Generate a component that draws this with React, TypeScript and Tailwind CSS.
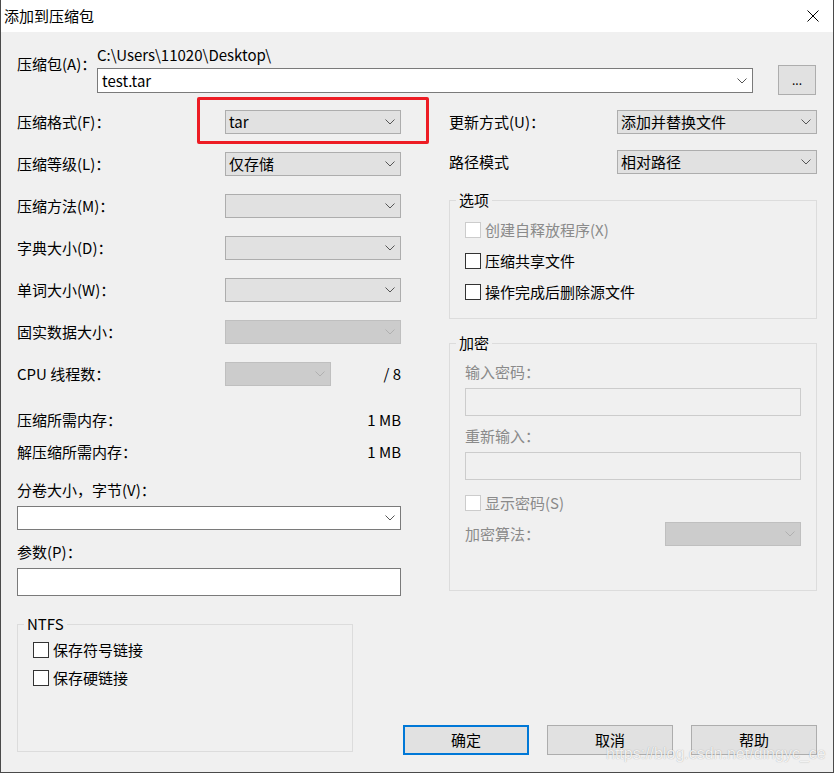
import React from "react";

type ComboKind = "gray" | "white" | "disabled";

function Chevron({ light }: { light?: boolean }) {
  return (
    <svg width="10" height="6" viewBox="0 0 10 6" className="shrink-0">
      <polyline
        points="0.5,0.5 5,5 9.5,0.5"
        fill="none"
        stroke={light ? "#b0b0b0" : "#555555"}
        strokeWidth="1"
      />
    </svg>
  );
}

function Combo({ value, kind = "gray", className = "" }: { value?: string; kind?: ComboKind; className?: string }) {
  const tone =
    kind === "white"
      ? "bg-white border-[#7a7a7a]"
      : kind === "disabled"
      ? "bg-[#cccccc] border-[#bfbfbf]"
      : "bg-[#e1e1e1] border-[#adadad]";
  return (
    <div className={`h-6 border flex items-center justify-between pl-[3px] pr-[5px] ${tone} ${className}`}>
      <span className="leading-5">{value}</span>
      <Chevron light={kind === "disabled"} />
    </div>
  );
}

function Check({ label, disabled }: { label: string; disabled?: boolean }) {
  return (
    <div className="flex items-center gap-[4px] h-5">
      <span className={`w-4 h-4 border bg-white ${disabled ? "border-[#cccccc]" : "border-[#333333]"}`} />
      <span className={`leading-5 ${disabled ? "text-[#8a8a8a]" : "text-black"}`}>{label}</span>
    </div>
  );
}

// group box: padding goes on the inner div so the legend stays near the left edge
function Group({ title, className = "", inner = "", children }: { title: string; className?: string; inner?: string; children: React.ReactNode }) {
  return (
    <fieldset className={`border border-[#dcdcdc] ${className}`}>
      <legend className="ml-[6px] px-[3px] leading-5">{title}</legend>
      <div className={inner}>{children}</div>
    </fieldset>
  );
}

// left column rows: label + combobox
const formatRows: { label: string; value?: string; kind: ComboKind }[] = [
  { label: "压缩格式(F)：", value: "tar", kind: "gray" },
  { label: "压缩等级(L)：", value: "仅存储", kind: "gray" },
  { label: "压缩方法(M)：", kind: "gray" },
  { label: "字典大小(D)：", kind: "gray" },
  { label: "单词大小(W)：", kind: "gray" },
  { label: "固实数据大小：", kind: "disabled" },
];

export default function App() {
  return (
    <div className="relative w-[834px] h-[773px] flex flex-col bg-[#f0f0f0] border-l border-r border-b border-[#4a4a4a] text-[15px] text-black font-['Noto_Sans_CJK_SC',sans-serif] overflow-hidden">
      {/* Title bar */}
      <div className="h-8 shrink-0 bg-white flex items-center justify-between pl-[3px] pr-[14px]">
        <span className="leading-5">添加到压缩包</span>
        <svg width="12" height="12" viewBox="0 0 12 12">
          <path d="M0.5 0.5 L11.5 11.5 M11.5 0.5 L0.5 11.5" stroke="#000" strokeWidth="1" />
        </svg>
      </div>

      <div className="flex-1 flex flex-col pt-[13px] pl-[16px] pr-[16px]">
        {/* Archive path */}
        <div className="flex items-start">
          <span className="w-[80px] mt-[9px] leading-5">压缩包(A)：</span>
          <div className="w-[656px] flex flex-col">
            <span className="leading-5">C:\Users\11020\Desktop\</span>
            <Combo value="test.tar" kind="white" className="mt-[3px] h-[25px] pl-[4px]" />
          </div>
          <div className="ml-[25px] mt-[20px] w-[38px] h-[30px] bg-[#e1e1e1] border border-[#adadad] flex items-center justify-center text-[12px] leading-none">
            ...
          </div>
        </div>

        {/* Two columns */}
        <div className="mt-[15px] flex gap-[48px]">
          {/* Left */}
          <div className="w-[384px] flex flex-col">
            <div className="flex flex-col gap-[18px]">
              {formatRows.map((r) => (
                <div key={r.label} className="flex items-center">
                  <span className="w-[208px] leading-5">{r.label}</span>
                  <Combo value={r.value} kind={r.kind} className="w-[176px]" />
                </div>
              ))}
              <div className="flex items-center">
                <span className="w-[208px] leading-5">CPU 线程数：</span>
                <Combo kind="disabled" className="w-[106px]" />
                <span className="flex-1 text-right leading-5">/ 8</span>
              </div>
            </div>

            <div className="mt-[24px] flex justify-between leading-5">
              <span>压缩所需内存：</span>
              <span>1 MB</span>
            </div>
            <div className="mt-[12px] flex justify-between leading-5">
              <span>解压缩所需内存：</span>
              <span>1 MB</span>
            </div>

            <span className="mt-[18px] leading-5">分卷大小，字节(V)：</span>
            <Combo kind="white" className="mt-[6px]" />

            <span className="mt-[12px] leading-5">参数(P)：</span>
            <div className="mt-[6px] h-[28px] bg-white border border-[#7a7a7a]" />
          </div>

          {/* Right */}
          <div className="w-[368px] flex flex-col">
            <div className="flex items-center">
              <span className="w-[168px] leading-5">更新方式(U)：</span>
              <Combo value="添加并替换文件" className="w-[200px]" />
            </div>
            <div className="mt-[16px] flex items-center">
              <span className="w-[168px] leading-5">路径模式</span>
              <Combo value="相对路径" className="w-[200px]" />
            </div>

            <Group title="选项" className="mt-[16px]" inner="pl-[15px] pt-[10px] pb-[16px] flex flex-col gap-[11px]">
              <Check label="创建自释放程序(X)" disabled />
              <Check label="压缩共享文件" />
              <Check label="操作完成后删除源文件" />
            </Group>

            <Group title="加密" className="mt-[14px]" inner="pl-[15px] pr-[15px] pt-[9px] pb-[44px] flex flex-col text-[#8a8a8a]">
              <span className="leading-5">输入密码：</span>
              <div className="mt-[6px] h-[28px] border border-[#cccccc]" />
              <span className="mt-[10px] leading-5">重新输入：</span>
              <div className="mt-[6px] h-[28px] border border-[#cccccc]" />
              <div className="mt-[13px]">
                <Check label="显示密码(S)" disabled />
              </div>
              <div className="mt-[9px] flex items-center justify-between">
                <span className="leading-5">加密算法：</span>
                <Combo kind="disabled" className="w-[136px]" />
              </div>
            </Group>
          </div>
        </div>

        {/* Bottom: NTFS + buttons */}
        <div className="mt-[18px] flex items-start">
          <Group title="NTFS" className="w-[336px] h-[138px]" inner="pl-[15px] pt-[6px] flex flex-col gap-[8px]">
            <Check label="保存符号链接" />
            <Check label="保存硬链接" />
          </Group>
          <div className="ml-auto mt-[111px] flex gap-[18px]">
            <div className="w-[126px] h-[30px] bg-[#e1e1e1] border-2 border-[#0078d7] flex items-center justify-center leading-5">确定</div>
            <div className="w-[126px] h-[30px] bg-[#e1e1e1] border border-[#adadad] flex items-center justify-center leading-5">取消</div>
            <div className="w-[126px] h-[30px] bg-[#e1e1e1] border border-[#adadad] flex items-center justify-center leading-5">帮助</div>
          </div>
        </div>
      </div>

      {/* Red highlight annotation */}
      <div className="absolute left-[196px] top-[97px] w-[232px] h-[47px] border-[3px] border-[#ed1c24] rounded-[2px] pointer-events-none" />

      {/* Watermark */}
      <span className="absolute left-[605px] top-[744px] text-[16px] leading-5 text-white/85 font-['Liberation_Sans',sans-serif] [text-shadow:0_0_1px_rgba(0,0,0,0.35)]">
        https://blog.csdn.net/dingyc_ce
      </span>
    </div>
  );
}
